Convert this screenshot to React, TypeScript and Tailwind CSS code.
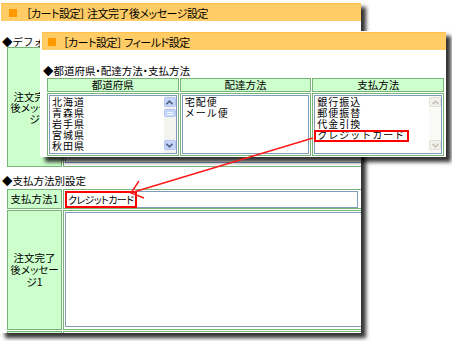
import React from "react";

const CELL = "border border-[#78b478]";
const LABEL = "bg-[#ccffcc]";

function TitleBar({ title, squareGap, textGap }: { title: string; squareGap: string; textGap: string }) {
  return (
    <div className="flex h-[18px] items-center border-t border-[#ffbf4a] bg-[#ffcc66]">
      <span className={`${squareGap} h-[8px] w-[8px] shrink-0 bg-[#ff9900]`} />
      <span className={`${textGap} whitespace-nowrap text-[11px] leading-[12px] tracking-[-0.5px] [font-feature-settings:'palt']`}>
        {title}
      </span>
    </div>
  );
}

function Chevron({ up, color }: { up?: boolean; color: string }) {
  return (
    <svg width="7" height="5" viewBox="0 0 7 5">
      <path d={up ? "M0.5 4.2 L3.5 1.2 L6.5 4.2" : "M0.5 0.8 L3.5 3.8 L6.5 0.8"} fill="none" stroke={color} strokeWidth="1.6" />
    </svg>
  );
}

function ScrollBar({ active }: { active: boolean }) {
  const btn = active ? "border-[#b3c6f2] bg-[#c6d6fb]" : "border-[#e2e0d6] bg-[#f2f1eb]";
  const c = active ? "#4d6185" : "#c4c2b4";
  return (
    <div className={`flex w-[12px] shrink-0 flex-col pt-[1px] ${active ? "bg-[#f3f3ef]" : "bg-[#fafaf7]"}`}>
      <div className={`flex h-[10px] items-center justify-center rounded-[2px] border ${btn}`}>
        <Chevron up color={c} />
      </div>
      {active && (
        <div className="mt-[2px] flex h-[8px] flex-col justify-center gap-[1px] rounded-[2px] border border-[#b3c6f2] bg-[#c6d6fb] px-[2px]">
          <span className="h-px bg-[#eef3fe]" />
          <span className="h-px bg-[#eef3fe]" />
        </div>
      )}
      <div className="flex-1" />
      <div className={`mb-[3px] flex h-[10px] items-center justify-center rounded-[2px] border ${btn}`}>
        <Chevron color={c} />
      </div>
    </div>
  );
}

function ListBox({ items, scroll, mark }: { items: string[]; scroll?: "on" | "off"; mark?: boolean }) {
  return (
    <div className="relative flex h-[59px] border border-[#7f9db9] bg-white">
      <div className="flex-1 whitespace-nowrap pl-[2px] text-[10px] leading-[11px] tracking-[1px]">
        {items.map((it, i) => (
          <React.Fragment key={it}>
            {i > 0 && <br />}
            {it}
          </React.Fragment>
        ))}
      </div>
      {scroll && <ScrollBar active={scroll === "on"} />}
      {mark && <div className="absolute left-[-1px] top-[34px] h-[12px] w-[95px] border-2 border-[#ff0000]" />}
    </div>
  );
}

function BackWindow() {
  return (
    <div className="absolute left-0 top-[2px] h-[331px] w-[361px] overflow-hidden bg-white shadow-[5px_5px_4px_rgba(0,0,0,0.8)]">
      <div className="ml-[1px] mt-[1px]">
        <TitleBar title="［カート設定］ 注文完了後メッセージ設定" squareGap="ml-[8px]" textGap="ml-[9px]" />
      </div>
      <div className="ml-[2px] mt-[15px] whitespace-nowrap text-[10.5px] leading-[11px]">◆デフォルト設定</div>

      <div className="ml-[7px] flex h-[120px] w-[370px] gap-[1px]">
        <div className={`${CELL} ${LABEL} flex w-[55px] shrink-0 items-center justify-center text-center text-[10.5px] leading-[11px] [font-feature-settings:'palt']`}>
          注文完了
          <br />
          後メッセー
          <br />
          ジ
        </div>
        <div className={`${CELL} flex flex-1 items-end p-[1px] pb-[3px]`}>
          <div className="h-[110px] w-full border border-[#7f9db9]" />
        </div>
      </div>

      <div className="ml-[2px] mt-[8px] whitespace-nowrap text-[10.5px] leading-[12px]">◆支払方法別設定</div>

      <div className="ml-[7px] mt-[2px] flex w-[370px] flex-col gap-[1px]">
        <div className="flex h-[20px] gap-[1px]">
          <div className={`${CELL} ${LABEL} flex w-[55px] shrink-0 items-center justify-center text-[10.5px]`}>支払方法1</div>
          <div className={`${CELL} flex-1 px-[1px] pt-[1px]`}>
            <div className="flex h-[17px] w-[293px] border border-[#7f9db9]">
              <span className="-ml-px -mt-px flex h-[17px] items-center whitespace-nowrap border-2 border-[#ff0000] pl-[1px] pr-[2px] text-[10px] tracking-[-0.6px] [font-feature-settings:'palt']">
                クレジットカード
              </span>
            </div>
          </div>
        </div>
        <div className="flex h-[120px] gap-[1px]">
          <div className={`${CELL} ${LABEL} flex w-[55px] shrink-0 items-center justify-center text-center text-[10.5px] leading-[12px] [font-feature-settings:'palt']`}>
            注文完了
            <br />
            後メッセー
            <br />
            ジ1
          </div>
          <div className={`${CELL} flex-1 px-[1px] pt-[1px]`}>
            <div className="h-[115px] w-full border border-[#7f9db9]" />
          </div>
        </div>
        <div className="flex h-[20px] gap-[1px]">
          <div className={`${CELL} ${LABEL} w-[55px] shrink-0`} />
          <div className={`${CELL} flex-1 px-[1px] pt-[1px]`}>
            <div className="h-[17px] w-[293px] border border-[#7f9db9]" />
          </div>
        </div>
      </div>
    </div>
  );
}

function FrontWindow() {
  const cols = [
    { head: "都道府県", items: ["北海道", "青森県", "岩手県", "宮城県", "秋田県"], scroll: "on" as const },
    { head: "配達方法", items: ["宅配便", "メール便"] },
    { head: "支払方法", items: ["銀行振込", "郵便振替", "代金引換", "クレジットカード"], scroll: "off" as const, mark: true },
  ];
  return (
    <div className="absolute left-[40px] top-[31px] h-[126px] w-[406px] overflow-hidden bg-white shadow-[5px_5px_4px_rgba(0,0,0,0.8)]">
      <div className="ml-[2px] mt-[1px]">
        <TitleBar title="［カート設定］ フィールド設定" squareGap="ml-[6px]" textGap="ml-[7px]" />
      </div>
      <div className="ml-[3px] mt-[15px] whitespace-nowrap text-[10.5px] leading-[12px] [font-feature-settings:'palt']">
        ◆都道府県・配達方法・支払方法
      </div>
      <div className="ml-[7px] mt-[1px] grid w-[397px] grid-cols-3 gap-[1px]">
        {cols.map((c) => (
          <div key={c.head} className={`${CELL} ${LABEL} flex h-[14px] items-center justify-center text-[10.5px]`}>
            {c.head}
          </div>
        ))}
        {cols.map((c) => (
          <div key={c.head + "b"} className={`${CELL} bg-white p-[1px]`}>
            <ListBox items={c.items} scroll={c.scroll} mark={c.mark} />
          </div>
        ))}
      </div>
    </div>
  );
}

export default function App() {
  return (
    <div className="relative h-[341px] w-[452px] overflow-hidden bg-white font-['Noto_Sans_CJK_JP','Noto_Sans',sans-serif] text-black">
      <BackWindow />
      <FrontWindow />
      <svg className="pointer-events-none absolute left-0 top-0" width="452" height="341">
        <line x1="313" y1="138" x2="132" y2="192.5" stroke="#ff1a1a" strokeWidth="1.4" />
        <polyline points="139,181 131,193 144,198" fill="none" stroke="#ff1a1a" strokeWidth="1.4" />
      </svg>
    </div>
  );
}
